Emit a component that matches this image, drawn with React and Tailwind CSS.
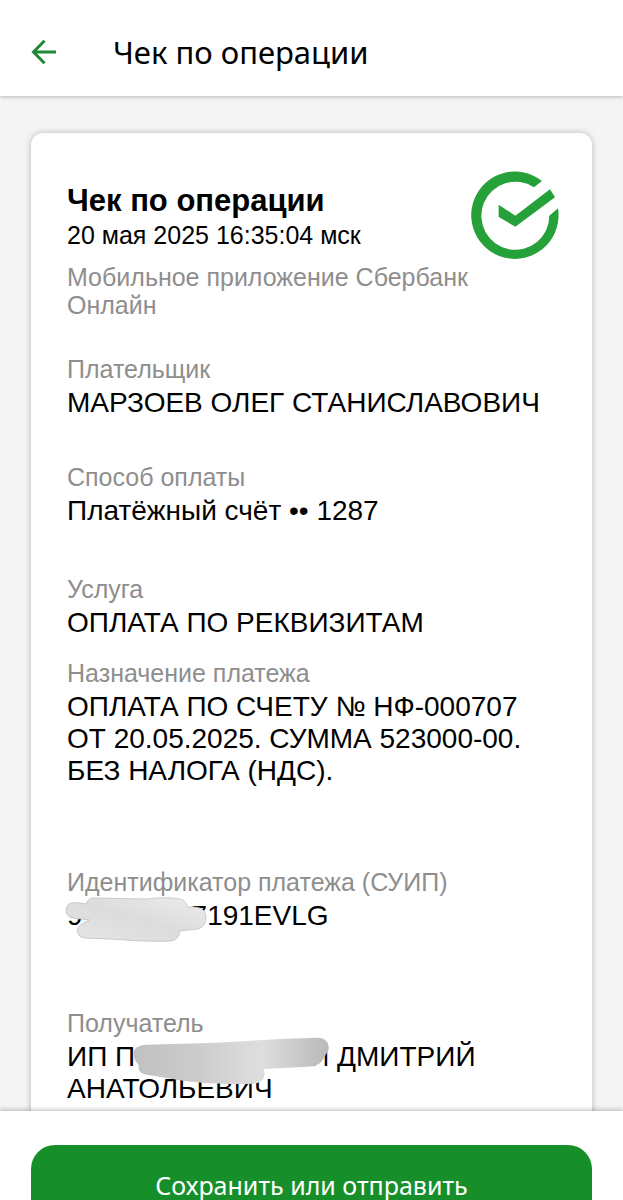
import { clsx } from 'clsx'

function BackArrow() {
  return (
    <svg viewBox="0 0 26 26" className="h-[26px] w-[26px]" fill="none" stroke="#1f8a35" strokeWidth="3" aria-hidden="true">
      <path d="M25 13H3M13.500 1.800 2.500 13l11 11.200" />
    </svg>
  )
}

function Logo() {
  return (
    <svg viewBox="61 152 264 267" className="h-[89px] w-[88px] shrink-0" fill="#26a038" aria-hidden="true">
      <path d="M274 182A131 131 0 1 0 322 264L296 286A102 102 0 1 1 250 201Z" />
      <path d="M144 253 194 286 298 207 313 231 194 319 144 290Z" />
    </svg>
  )
}

function IdSmudge() {
  return (
    <svg viewBox="45 78 426 138" className="absolute -left-0.5 -top-1 h-[46px] w-[142px]" aria-hidden="true">
      <defs>
        <linearGradient id="id-smudge" x1="0" y1="1" x2="1" y2="0">
          <stop offset="0" stopColor="#e6e6e6" />
          <stop offset="0.5" stopColor="#dcdcdc" />
          <stop offset="1" stopColor="#ececec" />
        </linearGradient>
      </defs>
      <path
        d="M48 122C49 106 56 98 72 98C90 97 102 104 110 100C114 88 122 83 136 84L290 87C330 82 360 82 390 87C404 91 410 100 414 112C440 108 468 112 468 142C466 168 455 176 435 178L390 183C386 202 378 213 358 213C320 216 250 212 200 208L105 204C86 202 81 190 83 176C88 164 102 158 118 150C92 144 50 152 48 122Z"
        fill="url(#id-smudge)"
        stroke="#b5b5b5"
        strokeWidth="2"
      />
    </svg>
  )
}

function NameSmudge() {
  return (
    <svg viewBox="249 111 591 144" className="absolute -top-1 left-[66px] h-12 w-[197px]" aria-hidden="true">
      <defs>
        <linearGradient id="name-smudge" x1="0" y1="0" x2="1" y2="0">
          <stop offset="0" stopColor="#c0c0c0" />
          <stop offset="0.35" stopColor="#cdcdcd" />
          <stop offset="0.65" stopColor="#dedede" />
          <stop offset="1" stopColor="#b9b9b9" />
        </linearGradient>
      </defs>
      <path
        d="M251 162C250 144 266 135 290 134L500 128L690 117L800 113C824 112 838 126 836 148C832 160 824 168 818 180C810 194 795 199 770 200L640 207C650 228 638 246 620 250C560 255 460 250 400 242L290 224C268 220 264 208 266 194C256 186 252 176 251 162Z"
        fill="url(#name-smudge)"
      />
    </svg>
  )
}

function Field({ label, className, children }) {
  return (
    <div className={clsx('flex flex-col gap-1', className)}>
      <dt className="text-[25px] leading-7 text-[#8e8e8e]">{label}</dt>
      <dd className="relative text-[28px] leading-8 text-black">{children}</dd>
    </div>
  )
}

export default function App() {
  return (
    <div className="flex h-screen flex-col overflow-hidden bg-[#f4f4f4] font-['Liberation_Sans',Arial,sans-serif]">
      <header className="z-10 flex h-24 shrink-0 items-center gap-14 bg-white px-[31px] pt-2 shadow-[0_1px_4px_rgba(0,0,0,0.25)]">
        <button type="button" aria-label="Назад">
          <BackArrow />
        </button>
        <h1 className="font-['Noto_Sans',sans-serif] text-[31px] leading-9 text-black">Чек по операции</h1>
      </header>

      <main className="min-h-0 flex-1 overflow-hidden px-[31px] pt-[37px]">
        <article className="rounded-xl bg-white pb-16 pl-9 pr-[33px] pt-[38px] shadow-[0_0_6px_rgba(0,0,0,0.25)]">
          <div className="flex items-start justify-between">
            <div className="pt-3">
              <h2 className="text-[31px] font-bold leading-9 text-black">Чек по операции</h2>
              <p className="text-[25px] leading-8 text-black">20 мая 2025 16:35:04 мск</p>
              <p className="mt-3 text-[25px] leading-7 text-[#8e8e8e]">Мобильное приложение Сбербанк Онлайн</p>
            </div>
            <Logo />
          </div>

          <dl className="mt-9">
            <Field label="Плательщик">МАРЗОЕВ ОЛЕГ СТАНИСЛАВОВИЧ</Field>
            <Field label="Способ оплаты" className="mt-11">
              Платёжный счёт •• 1287
            </Field>
            <Field label="Услуга" className="mt-12">
              ОПЛАТА ПО РЕКВИЗИТАМ
            </Field>
            <Field label="Назначение платежа" className="mt-5">
              ОПЛАТА ПО СЧЕТУ № НФ-000707 ОТ 20.05.2025. СУММА 523000-00. БЕЗ НАЛОГА (НДС).
            </Field>
            <Field label="Идентификатор платежа (СУИП)" className="mt-[81px]">
              9<span className="inline-block w-[109px]" />
              7191EVLG
              <IdSmudge />
            </Field>
            <Field label="Получатель" className="mt-[77px]">
              ИП П<span className="inline-block w-[174px]" />И ДМИТРИЙ АНАТОЛЬЕВИЧ
              <NameSmudge />
            </Field>
          </dl>
        </article>
      </main>

      <footer className="z-10 h-[89px] shrink-0 bg-white px-[31px] pt-[34px] shadow-[0_-2px_4px_rgba(0,0,0,0.2)]">
        <button
          type="button"
          className="h-20 w-full rounded-3xl bg-[#168f2b] font-['Noto_Sans',sans-serif] text-[25px] leading-8 text-white"
        >
          Сохранить или отправить
        </button>
      </footer>
    </div>
  )
}
